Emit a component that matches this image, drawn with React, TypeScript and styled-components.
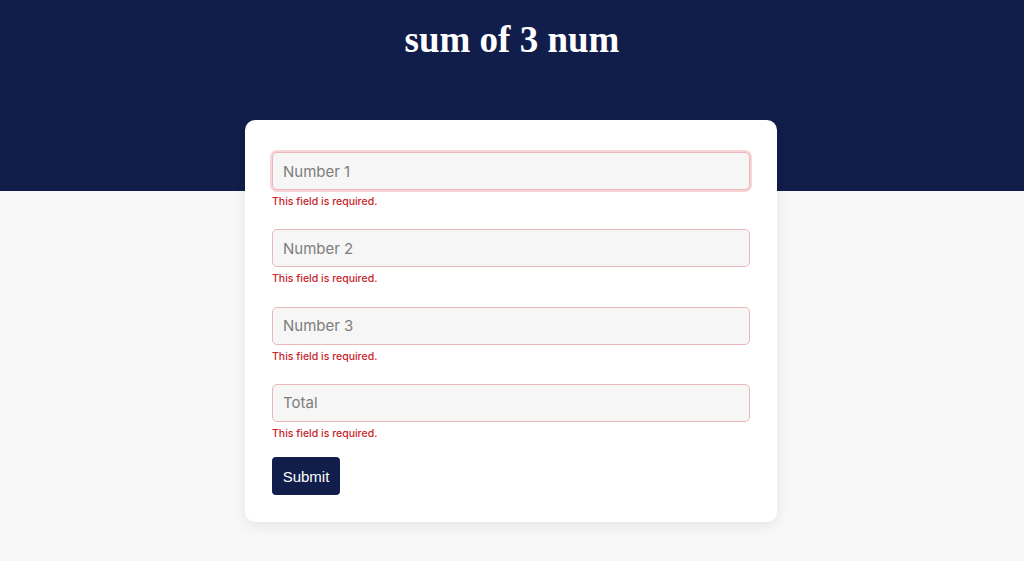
import React from 'react';
import styled, { createGlobalStyle } from 'styled-components';

const GlobalStyle = createGlobalStyle`
  * { box-sizing: border-box; }
  html, body {
    margin: 0;
    padding: 0;
    background: #f8f8f8;
    font-family: Inter, "Noto Sans", sans-serif;
  }
`;

const Page = styled.div`
  min-height: 561px;
  background: #f8f8f8;
`;

const Header = styled.header`
  height: 191px;
  background: #111d4a;
  display: flex;
  justify-content: center;
  padding-top: 16px;
`;

const Title = styled.h1`
  margin: 0;
  font-family: "Liberation Serif", "DejaVu Serif", serif;
  font-weight: 700;
  font-size: 37px;
  line-height: 48px;
  color: #ffffff;
`;

const Card = styled.form`
  width: 532px;
  margin: -71px auto 0;
  transform: translateX(-1px);
  background: #ffffff;
  border-radius: 10px;
  box-shadow: 0 4px 14px rgba(0, 0, 0, 0.08);
  padding: 32px 27px 27px;
  display: flex;
  flex-direction: column;
`;

const Field = styled.div`
  display: flex;
  flex-direction: column;
  margin-bottom: 20.3px;
  &:last-of-type { margin-bottom: 16.5px; }
`;

const Input = styled.input<{ $focused?: boolean }>`
  height: 38px;
  width: 100%;
  border: 1px solid #e9b7b9;
  border-radius: 5px;
  background: #f6f6f6;
  padding: 0 10px;
  font-family: Inter, "Noto Sans", sans-serif;
  font-size: 15px;
  color: #333;
  outline: none;
  box-shadow: ${(p) => (p.$focused ? '0 0 0 2px rgba(240, 160, 165, 0.45)' : 'none')};
  &::placeholder { color: #7d7d7d; }
`;

const Error = styled.span`
  margin-top: 5px;
  font-size: 10.5px;
  line-height: 14px;
  font-weight: 500;
  color: #c8232c;
`;

const Submit = styled.button`
  align-self: flex-start;
  width: 68px;
  height: 38px;
  border: none;
  border-radius: 4px;
  background: #111d4a;
  color: #ffffff;
  font-family: "Liberation Sans", Arial, sans-serif;
  font-size: 15px;
  cursor: pointer;
`;

const fields = ['Number 1', 'Number 2', 'Number 3', 'Total'];

const App = () => {
  return (
    <Page>
      <GlobalStyle />
      <Header>
        <Title>sum of 3 num</Title>
      </Header>
      <Card onSubmit={(e) => e.preventDefault()}>
        {fields.map((label, index) => (
          <Field key={label}>
            <Input placeholder={label} $focused={index === 0} />
            <Error>This field is required.</Error>
          </Field>
        ))}
        <Submit type="submit">Submit</Submit>
      </Card>
    </Page>
  );
};

export default App;
